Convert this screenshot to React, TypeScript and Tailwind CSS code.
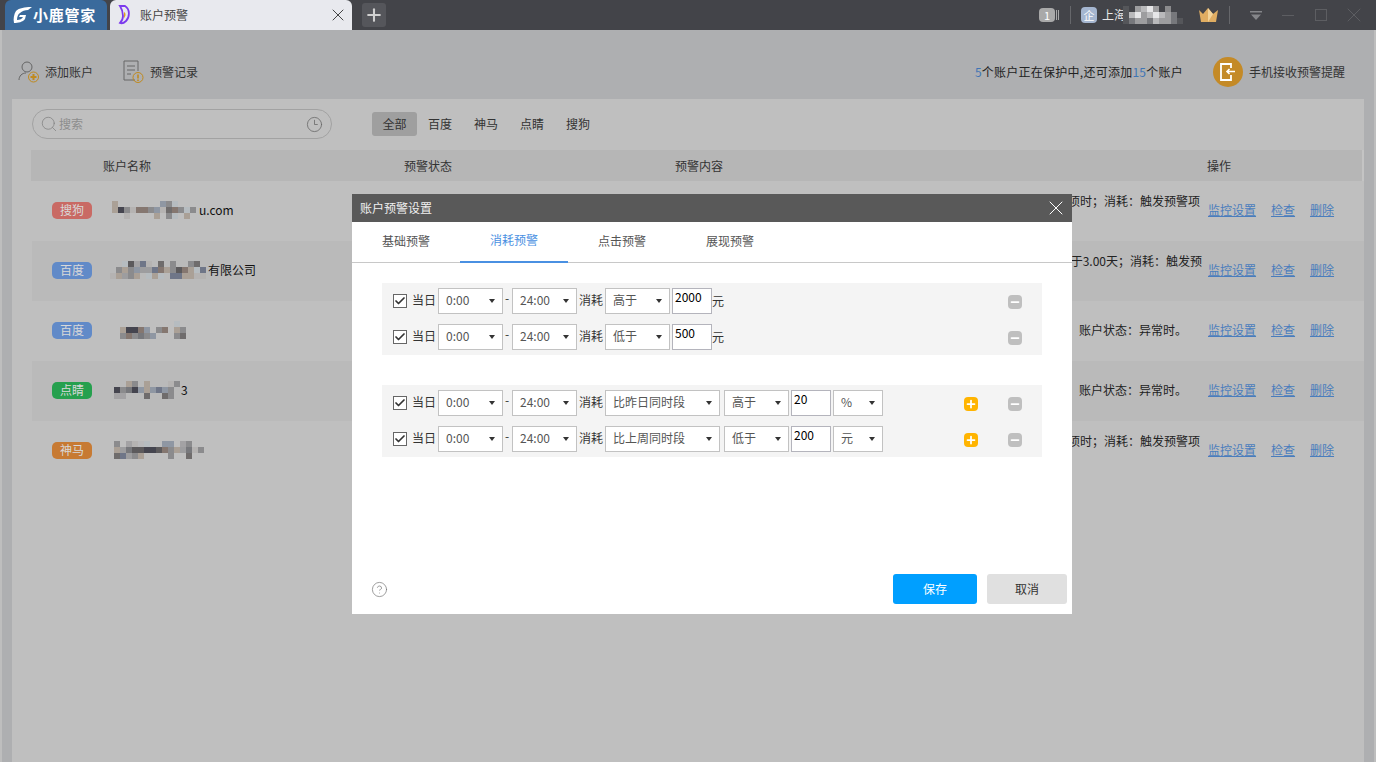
import React from 'react';
import { Check, CircleHelp, Clock3, Minus, Plus, Search, X } from 'lucide-react';

const PALETTE: Record<string, string> = {
  d: '#45454f',
  k: '#5c5a5c',
  m: '#6f6c6c',
  g: '#8b8b8d',
  l: '#a3a2a4',
  p: '#b5b3b2',
  b: '#8f97a3',
  n: '#6f7688',
  r: '#857770',
  s: '#b6bcc0',
  t: '#aaa096',
  w: '#e6e6e8',
  x: '#b9b9bb',
  y: '#9d9d9f',
  z: '#77787c',
  c: '#55565a',
};

// blurred account names, one char per 6px cell
function Mosaic({ rows, cell = 6 }: { rows: string[]; cell?: number }) {
  const cols = Math.max(...rows.map((r) => r.length));
  return (
    <svg width={cols * cell} height={rows.length * cell} className="block shrink-0">
      {rows.map((row, y) =>
        row.split('').map((c, x) =>
          PALETTE[c] ? <rect key={`${x}-${y}`} x={x * cell} y={y * cell} width={cell} height={cell} fill={PALETTE[c]} /> : null,
        ),
      )}
    </svg>
  );
}

const accounts = [
  {
    tag: '搜狗',
    color: 'bg-[#c96a64]',
    rows: ['t.......bgs....', 'tdgprrgbpmrgsg.', '..p....t.gs.t..'],
    suffix: 'u.com',
    nameCls: 'ml-5',
    sufCls: '-ml-[3px]',
    text: '预警项时；消耗：触发预警项',
    textCls: 'mb-[20px] ml-auto',
    opsCls: 'ml-2',
  },
  {
    tag: '百度',
    color: 'bg-[#618ac8]',
    rows: ['..sklnp.m.g..gm.', '.gtgbyynrtgkrtsn', 'ptygt.sts.nnttpp'],
    suffix: '有限公司',
    nameCls: 'ml-[18px]',
    sufCls: 'ml-0.5',
    text: '账户余额低于3.00天；消耗：触发预',
    textCls: 'mb-[20px] ml-auto',
    opsCls: 'ml-[6px]',
  },
  {
    tag: '百度',
    color: 'bg-[#618ac8]',
    rows: ['..........s.', '.tddrb.gr.tg', '.grgzgb...gm'],
    suffix: '',
    nameCls: 'ml-[22px]',
    sufCls: '',
    text: '账户状态：异常时。',
    textCls: 'mb-0.5 ml-auto',
    opsCls: 'ml-[21px]',
  },
  {
    tag: '点睛',
    color: 'bg-[#26a04e]',
    rows: ['..tg.t...pg', 'dgzdbtbnbg.', 'll...m..mg.'],
    suffix: '3',
    nameCls: 'ml-[22px]',
    sufCls: 'ml-px',
    text: '账户状态：异常时。',
    textCls: 'mb-0.5 ml-auto',
    opsCls: 'ml-[21px]',
  },
  {
    tag: '神马',
    color: 'bg-[#c77a33]',
    rows: ['g.lpxs..bb.lg..', 'tyzkkddkrgtyzpg', 'mnygt....g..m..'],
    suffix: '',
    nameCls: 'ml-[22px]',
    sufCls: '',
    text: '预警项时；消耗：触发预警项',
    textCls: 'mb-[20px] ml-auto',
    opsCls: 'ml-2',
  },
];

function Caret() {
  return (
    <svg width="6" height="4" viewBox="0 0 6 4" className="shrink-0">
      <path d="M0 0h6L3 4z" fill="#333" />
    </svg>
  );
}

function Select({ value, width }: { value: string; width: string }) {
  return (
    <div className={`flex h-[26px] items-center justify-between border border-[#c2c2c2] bg-white pl-[7px] pr-[7px] text-[#555] ${width}`}>
      <span className="pb-0.5">{value}</span>
      <Caret />
    </div>
  );
}

function Num({ value }: { value: string }) {
  return (
    <input
      readOnly
      value={value}
      className="block h-[26px] w-10 border border-[#b4b4bc] bg-white pb-[10px] pl-0.5 text-black outline-none"
    />
  );
}

function IconBtn({ kind }: { kind: 'add' | 'remove' }) {
  return (
    <span className={`mt-0.5 flex h-3.5 w-3.5 items-center justify-center rounded-sm ${kind === 'add' ? 'bg-[#ffb400]' : 'bg-[#bfbfbf]'}`}>
      {kind === 'add' ? <Plus size={12} strokeWidth={3.5} color="#fff" /> : <Minus size={12} strokeWidth={3.5} color="#fff" />}
    </span>
  );
}

function TimeHead() {
  return (
    <>
      <span className="ml-[11px] flex h-3.5 w-3.5 items-center justify-center border border-[#666] bg-white">
        <Check size={12} strokeWidth={3.5} color="#333" />
      </span>
      <span className="ml-[5px] w-[26px] pb-0.5 text-[#333]">当日</span>
      <Select value="0:00" width="w-[65px]" />
      <span className="mb-[6px] w-[9px] pl-[2px] text-[#333]">-</span>
      <Select value="24:00" width="w-[65px]" />
      <span className="ml-0.5 w-[26px] pb-0.5 text-[#333]">消耗</span>
    </>
  );
}

function Modal() {
  return (
    <div className="absolute left-[352px] top-[194px] flex h-[420px] w-[720px] flex-col bg-white text-xs">
      <div className="flex h-7 shrink-0 items-center justify-between bg-[#595959] pl-2 pr-1 text-[#f0f0f0]">
        <span>账户预警设置</span>
        <X size={24} strokeWidth={1} color="#fff" />
      </div>
      <div className="flex h-[41px] shrink-0 border-b border-[#c8c8c8] text-[#555]">
        {['基础预警', '消耗预警', '点击预警', '展现预警'].map((t, i) => (
          <div
            key={t}
            className={`-mb-px flex w-[108px] items-center justify-center pb-[3px] ${i === 1 ? 'border-b-2 border-[#4a90e2] text-[#4a90e2]' : ''}`}
          >
            {t}
          </div>
        ))}
      </div>

      <div className="ml-[30px] mt-5 flex w-[660px] flex-col gap-2.5 bg-[#f4f4f4] py-[5px]">
        {[
          { cmp: '高于', val: '2000' },
          { cmp: '低于', val: '500' },
        ].map((r) => (
          <div key={r.val} className="flex items-center">
            <TimeHead />
            <Select value={r.cmp} width="w-[65px]" />
            <span className="ml-0.5">
              <Num value={r.val} />
            </span>
            <span className="text-[#333]">元</span>
            <span className="ml-auto mr-5">
              <IconBtn kind="remove" />
            </span>
          </div>
        ))}
      </div>

      <div className="ml-[30px] mt-[30px] flex w-[660px] flex-col gap-2.5 bg-[#f4f4f4] py-[5px]">
        {[
          { base: '比昨日同时段', cmp: '高于', val: '20', unit: '%' },
          { base: '比上周同时段', cmp: '低于', val: '200', unit: '元' },
        ].map((r) => (
          <div key={r.val} className="flex items-center">
            <TimeHead />
            <Select value={r.base} width="w-[115px]" />
            <Select value={r.cmp} width="ml-1 w-[65px]" />
            <span className="ml-0.5">
              <Num value={r.val} />
            </span>
            <Select value={r.unit} width="ml-0.5 w-[50px]" />
            <span className="ml-[81px]">
              <IconBtn kind="add" />
            </span>
            <span className="ml-[30px]">
              <IconBtn kind="remove" />
            </span>
          </div>
        ))}
      </div>

      <div className="mt-auto mb-2.5 flex items-center pl-[19px] pr-[5px]">
        <CircleHelp size={17} strokeWidth={1} color="#777" />
        <button className="ml-auto h-[30px] w-[84px] rounded-[3px] bg-[#009fff] text-white">保存</button>
        <button className="ml-2.5 h-[30px] w-20 rounded-[3px] bg-[#e0e0e0] text-[#333]">取消</button>
      </div>
    </div>
  );
}

function TitleBar() {
  return (
    <div className="flex h-[30px] shrink-0 bg-[#434449] text-xs">
      <div className="ml-[5px] flex w-[102px] items-center rounded-t-md bg-[#3a6a9c] pl-2 text-white">
        <svg width="19" height="18" viewBox="0 0 19 18" className="shrink-0">
          <path d="M18 1C12 1 6 2 3 5 1 8 0 13 1 17c4 0 9-1 11-4l1-4H7l-1 2h4c-1 2-3 3-6 3 0-3 1-6 3-7 2-2 5-3 8-3l4-3z" fill="#fff" />
        </svg>
        <span className="ml-px text-[15px] font-bold tracking-[0.75px]">小鹿管家</span>
      </div>
      <div className="ml-[3px] flex w-[242px] items-center rounded-t-md bg-[#e8e9ee] pl-1 pr-1 text-[#444]">
        <svg width="14" height="20" viewBox="0 0 14 20" className="ml-1 shrink-0">
          <path d="M2 1h5c5 3 5 11 1 15-2 2-4 3-6 2 2-2 3-4 3-7 0-4-1-7-3-10z" fill="none" stroke="#7c3aed" strokeWidth="1.8" />
          <path d="M6 7c2 1 2 4 0 6z" fill="#e0a020" />
        </svg>
        <span className="ml-[8px]">账户预警</span>
        <X size={20} strokeWidth={1} color="#222" className="ml-auto" />
      </div>
      <div className="ml-2.5 mt-[3px] flex h-6 w-6 items-center justify-center rounded-[3px] bg-[#55565b]">
        <Plus size={20} strokeWidth={2.5} color="#d0d0d0" />
      </div>

      <div className="ml-auto flex items-center">
        <span className="flex h-3.5 w-4 items-center justify-center rounded-sm bg-[#a9a9a9] text-[11px] text-white">1</span>
        <span className="ml-px h-2.5 w-[3px] border-x border-[#a9a9a9]" />
        <span className="ml-[11px] h-[18px] w-px bg-[#66676b]" />
        <span className="ml-2.5 flex h-4 w-4 items-center justify-center rounded-sm bg-[#a5b6d0] text-[11px] text-white">企</span>
        <span className="ml-[5px] w-6 text-[#e8e8e8]">上海</span>
        <span className="-ml-[3px]">
          <Mosaic rows={['c.yxwy.g..', 'cxwyxwxyz.', 'czyyzxyyzc']} />
        </span>
        <span className="ml-[15px]">
          <svg width="21" height="16" viewBox="0 0 21 16" className="block">
            <path d="M1 3l4 4 5-6 5 6 5-4-2 12H3z" fill="#e0ad62" />
            <path d="M10 1l5 6-5 8z" fill="#f3d49a" />
          </svg>
        </span>
        <span className="ml-2.5 h-[18px] w-px bg-[#66676b]" />
        <svg width="12" height="9" viewBox="0 0 12 9" className="ml-5">
          <path d="M0 0h12v1.500H0zM1 3.500h10L6 9z" fill="#85868a" />
        </svg>
        <span className="ml-5 h-px w-3 bg-[#5d5e62]" />
        <span className="ml-[21px] h-3 w-3 border border-[#5d5e62]" />
        <X size={24} strokeWidth={1} color="#5d5e62" className="ml-[15px] mr-2.5" />
      </div>
    </div>
  );
}

function Toolbar() {
  return (
    <div className="flex h-[69px] shrink-0 items-center pl-4 pr-[29px] pt-[14px] text-xs text-[#333]">
      <svg width="22" height="24" viewBox="0 0 22 24" className="shrink-0">
        <circle cx="9" cy="7" r="5" fill="none" stroke="#666" />
        <path d="M1 20c0-4 3-7 7-7" fill="none" stroke="#666" />
        <circle cx="15.500" cy="17" r="5" fill="none" stroke="#c08a1e" />
        <path d="M15.500 14v6M12.500 17h6" stroke="#c08a1e" strokeWidth="2" />
      </svg>
      <span className="ml-[5px]">添加账户</span>
      <svg width="21" height="24" viewBox="0 0 21 24" className="ml-[30px] shrink-0">
        <path d="M12 20H1V1h14v10" fill="none" stroke="#666" />
        <path d="M4 6h8M4 10h8M4 14h4" stroke="#666" />
        <circle cx="15" cy="17.500" r="5" fill="none" stroke="#c08a1e" />
        <path d="M15 14.500v4M15 19.500v1.500" stroke="#c08a1e" strokeWidth="1.6" />
      </svg>
      <span className="ml-[6px]">预警记录</span>
      <span className="ml-auto tracking-[0.25px] text-[#222]">
        <span className="text-[#3f75b5]">5</span>个账户正在保护中,还可添加<span className="text-[#3f75b5]">15</span>个账户
      </span>
      <span className="ml-[30px] flex h-[30px] w-[30px] items-center justify-center rounded-full bg-[#c48a27]">
        <svg width="16" height="18" viewBox="0 0 16 18">
          <path d="M11 5V1H1v16h10v-5" fill="none" stroke="#fff" strokeWidth="1.8" />
          <path d="M15 8.500H7M9.500 6L7 8.500l2.500 2.500" fill="none" stroke="#fff" strokeWidth="1.6" />
        </svg>
      </span>
      <span className="ml-1.5">手机接收预警提醒</span>
    </div>
  );
}

function AccountPanel() {
  return (
    <div className="ml-[10px] mr-[10px] flex min-h-0 flex-1 flex-col bg-[#bfbfbf] text-xs text-[#222]">
      <div className="flex h-[51px] shrink-0 items-start pl-5 pt-2.5">
        <div className="flex h-[30px] w-[300px] items-center rounded-full border border-[#a2a2a2] pl-[7px] pr-2 text-[#8d8d8d]">
          <Search size={18} strokeWidth={1} color="#808080" />
          <span className="ml-px">搜索</span>
          <Clock3 size={17} strokeWidth={1.1} color="#666" className="ml-auto" />
        </div>
        <div className="ml-10 mt-[3px] flex h-6 items-center text-[#333]">
          <span className="flex h-6 w-[45px] items-center justify-center rounded-[3px] bg-[#9f9f9f]">全部</span>
          <span className="ml-[11px]">百度</span>
          <span className="ml-[22px]">神马</span>
          <span className="ml-[22px]">点睛</span>
          <span className="ml-[22px]">搜狗</span>
        </div>
      </div>
      <div className="ml-[19px] flex h-[31px] shrink-0 items-center border-r-2 border-[#c4c4c4] bg-[#b6b6b6] text-[#333]">
        <span className="ml-[72px] w-[301px]">账户名称</span>
        <span className="w-[271px]">预警状态</span>
        <span>预警内容</span>
        <span className="ml-auto mr-[131px]">操作</span>
      </div>
      {accounts.map((a, i) => (
        <div key={i} className={`ml-[20px] flex h-[60px] shrink-0 items-center ${i % 2 === 1 ? 'bg-[#bababa]' : ''}`}>
          <span className={`mb-px ml-5 flex h-[17px] w-10 shrink-0 items-center justify-center rounded-[5px] pb-px text-[#d8d8d8] ${a.color}`}>{a.tag}</span>
          <div className={`mb-0.5 flex items-center ${a.nameCls}`}>
            <Mosaic rows={a.rows} />
            <span className={`text-[#111] ${a.sufCls}`}>{a.suffix}</span>
          </div>
          <span className={`whitespace-nowrap ${a.textCls}`}>{a.text}</span>
          <span className={`mb-0.5 w-[156px] shrink-0 text-[#4a7dbd] ${a.opsCls}`}>
            <span className="underline">监控设置</span>
            <span className="ml-[15px] underline">检查</span>
            <span className="ml-[15px] underline">删除</span>
          </span>
        </div>
      ))}
    </div>
  );
}

export default function App() {
  return (
    <div
      className="relative flex h-[762px] w-[1376px] flex-col overflow-hidden bg-[#bebebe]"
      style={{ fontFamily: '"Noto Sans CJK SC", "Liberation Sans", sans-serif' }}
    >
      <TitleBar />
      <div className="ml-0.5 mr-0.5 flex min-h-0 flex-1 flex-col bg-[#aeafb1]">
        <Toolbar />
        <AccountPanel />
      </div>
      <Modal />
    </div>
  );
}
